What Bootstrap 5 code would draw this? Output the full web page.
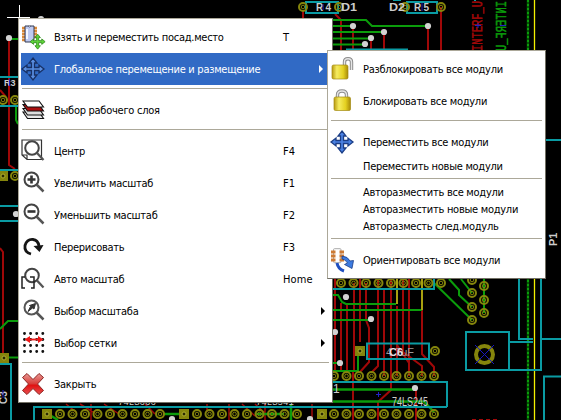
<!DOCTYPE html>
<html lang="ru">
<head>
<meta charset="utf-8">
<meta name="viewport" content="width=device-width, initial-scale=1">
<title>Pcbnew</title>
<link href="https://cdn.jsdelivr.net/npm/bootstrap@5.3.0/dist/css/bootstrap.min.css" rel="stylesheet">
<style>
body{width:561px;height:420px;background:#000;font-family:"DejaVu Sans Condensed","DejaVu Sans",sans-serif;font-stretch:condensed;font-size:11px;color:#000}
.board{width:561px;height:420px}
.ctx{background:#fff;border:1px solid #aca899;border-right-color:#716f64;border-bottom-color:#716f64;padding:2px;border-radius:0;line-height:17px;letter-spacing:-.27px}
.main-menu{left:18px;top:18px;width:315px;height:385px}
.sub-menu{left:327px;top:50px;width:219px;height:229px}
.mi{height:32px;color:#000;white-space:nowrap}
.mi.slim{height:17px}
.mi.chosen{background:#316ac5;color:#fff}
.ico{width:24px;height:24px;flex:none;overflow:visible}
.lbl{width:238px;padding-left:9px;flex:none}
.hotkey{letter-spacing:.1px}
.sub-menu .lbl{padding-left:9px;width:189px}
.sep{height:9px;padding:3px 1px 0}
.sep::before{content:"";display:block;height:1px;background:#aca899}
.arrow{width:4px;height:8px;margin-left:auto;margin-right:5px}
</style>
<script src="https://cdn.jsdelivr.net/npm/bootstrap@5.3.0/dist/js/bootstrap.bundle.min.js"></script>
</head>
<body class="position-relative overflow-hidden m-0">
<svg class="board d-block" viewBox="0 0 561 420" fill="none">
<defs>
<g id="pad"><circle r="4" stroke="#85850c" stroke-width="2"/><circle r="1.8" stroke="#85850c"/></g>
<g id="sq"><rect x="-5" y="-5" width="10" height="10" fill="#85850c"/><circle r="2" fill="#292900" stroke="#b0b030"/></g>
<circle id="via" r="3.1" fill="#d2d2d2"/>
<g id="row"><use href="#pad" x="0"/><use href="#pad" x="12.5"/><use href="#pad" x="25"/><use href="#pad" x="37.5"/><use href="#pad" x="50"/><use href="#pad" x="62.5"/><use href="#pad" x="75"/><use href="#pad" x="87.5"/><use href="#pad" x="100"/></g>
<g id="arrows4"><path d="M12 1 16 6H13.5V10.500H18V8L23 12 18 16V13.500H13.500V18H16L12 23 8 18H10.500V13.500H6V16L1 12 6 8V10.500H10.500V6H8Z"/></g>
</defs>
<!-- front copper -->
<g stroke="#a00808" stroke-width="2">
<path d="M9 38V165L15 169M0 90 6 97M0 248 3 252V353M303 10V18M335 14 341 20V50M353 26V50M384 32V50M371 38V50M428 26V50M441 7V50"/>
<path d="M335 279V372M341 303V372M347 303V372M354 283V372M360 279V342M366 283V320L369 328V362L360 372M378 279V366L372 372M384 290V376M391 279V390L378 402V420M397 306V376M403 279V356M409 279V376M422 310V354L434 367V376M403 352 422 366V376M397 345 409 363M353 372V420M416 389V420"/>
<path d="M66 404 76 412M80 404 95 413M91 404V420M104 404 119 414M145 404 155 414M207 404V412M229 404V420M242 404 255 416M255 404 266 414M265 404V420M312 404V420" stroke-width="1.500"/>
</g>
<!-- back copper -->
<g stroke="#0b9c0b" stroke-width="2">
<path d="M9 39H18M16 106V120L18 124M0 329 8 321H18M0 357.500H18M333 20H366L372 26H428M333 26H353M333 32H384M333 38.500H371M333 44.500H365"/>
<path d="M333 295H338L342 302L346 304H396M333 310H422M333 320H371M333 371H358V351M434 283 472 320M449 279 459 290V295L472 307M461 279 472 293M484 279V313M333 363H340"/>
<path d="M333 389.500H415M333 401.500H424L434 412M48 414 58 420M163 414H184M256 414H284M291 404V420" stroke-width="2.500"/>
<path d="M528 0V420" stroke-width="2.500" stroke="#045504"/><path d="M528 0V420" stroke="#0b9c0b" stroke-dasharray="2 2"/>
</g>
<path d="M397 279V304M422 279V310" stroke="#a8a010" stroke-width="2"/>
<path d="M534.500 0V420" stroke="#f4f000" stroke-width="1.300"/>
<!-- silkscreen -->
<g stroke="#0a9ba3" stroke-width="2">
<path d="M0 77H18M0 106H18M0 170H18M0 206H18M0 221H18M0 364H11V420M34 420V407H447M306 2H338V13H306ZM407 2H437V13H407ZM346 49.500H408M333 289H434V279M333 382H447V407M367 343.500H429V359H367ZM466 332H509V370H466ZM509 342H533M509 370H541V279M519 279V339H533M541 339H561M561 376.500H544V420M546 140H561M475 0V1M393 0H401"/>
</g>
<!-- pads -->
<g><use href="#pad" x="3" y="100"/><use href="#pad" x="15" y="100"/><use href="#sq" x="3" y="176"/><use href="#pad" x="15" y="176"/><use href="#sq" x="4" y="358"/>
<use href="#sq" x="47" y="414"/><use href="#row" x="60" y="414"/><use href="#sq" x="184" y="414"/><use href="#row" x="197" y="414"/><use href="#sq" x="322" y="414"/><use href="#row" x="334" y="414"/><use href="#row" x="334" y="376"/>
<use href="#row" x="341" y="283"/><use href="#pad" x="303" y="7"/><use href="#pad" x="339" y="7"/><use href="#pad" x="405" y="7"/><use href="#pad" x="441" y="7"/>
<use href="#sq" x="360" y="351"/><use href="#pad" x="435" y="351"/><use href="#pad" x="472" y="293"/><use href="#pad" x="472" y="307"/><use href="#pad" x="472" y="320"/><use href="#pad" x="472" y="280"/><use href="#pad" x="484" y="286"/><use href="#pad" x="484" y="300"/><use href="#pad" x="484" y="313"/>
<circle cx="484.500" cy="354.500" r="8.500" stroke="#85850c" stroke-width="4"/><path d="M475 345 494 364M494 345 475 364" stroke="#1818c0"/></g>
<g><use href="#via" x="9" y="38"/><use href="#via" x="41" y="19"/><use href="#via" x="353" y="26"/><use href="#via" x="371" y="38"/><use href="#via" x="365" y="44"/><use href="#via" x="384" y="32"/><use href="#via" x="428" y="26"/><use href="#via" x="346" y="297"/><use href="#via" x="371" y="319"/><use href="#via" x="340" y="363"/><use href="#via" x="335" y="332"/><use href="#via" x="415" y="388"/><use href="#via" x="16" y="214"/><use href="#via" x="310" y="419"/><use href="#via" x="172" y="419"/></g>
<path d="M19.500 5V18M7 17.500H30" stroke="#fff"/>
<g font-family="Liberation Sans" font-size="10" fill="#ccc">
<text x="4" y="86" font-weight="700" font-size="9">R3</text><path d="M9.500 79V86" stroke="#2020c0"/>
<text x="316" y="11" font-weight="700" textLength="15">R4</text><text x="341" y="11" font-weight="700" font-size="11" textLength="16" lengthAdjust="spacingAndGlyphs">D1</text><text x="389" y="11" font-weight="700" font-size="11" textLength="16" lengthAdjust="spacingAndGlyphs">D2</text><text x="414" y="11" font-weight="700" textLength="15">R5</text>
<path d="M422 3V11M323 4V10" stroke="#2020c0"/>
<text x="386" y="355.500" font-size="11" fill="#999" textLength="28">4.7uF</text><text x="389" y="356" font-weight="700" font-size="11" fill="#e4dce4">C6</text>
<text x="392" y="405.500" font-size="12" font-family="Liberation Sans Narrow,Liberation Sans" textLength="36" lengthAdjust="spacingAndGlyphs">74LS245</text>
<text x="333" y="393" font-size="12">1</text>
<text x="118" y="405" font-size="9" font-family="Liberation Mono">74LS666</text><text x="256" y="405" font-size="9" font-family="Liberation Mono">74LS541</text>
<text transform="translate(557 246) rotate(-90)" font-weight="700" font-size="11">P1</text>
<text transform="translate(7 404) rotate(-90)" font-weight="700" font-size="10">C3</text>
<text transform="translate(482 51) rotate(-90)" font-size="14" fill="#a00808" stroke="#a00808" stroke-width=".5" font-family="Liberation Mono" textLength="50" lengthAdjust="spacingAndGlyphs">INTERF_U</text>
<text transform="translate(506 1) rotate(90) scale(1 -1)" font-size="14" fill="#0b9c0b" stroke="#0b9c0b" stroke-width=".5" font-family="Liberation Mono" textLength="50" lengthAdjust="spacingAndGlyphs">INTERF_U</text>
</g>
<path d="M378.500 392V397M376 394.500H381M478 23V28M475 25.500H481M500 25.500H506M3 390V398" stroke="#2222c8"/>
<path d="M472 419.500H497" stroke="#a00808" stroke-dasharray="4 3"/>
</svg>

<nav class="ctx main-menu position-absolute">
<div class="mi d-flex align-items-center"><svg class="ico" viewBox="0 0 24 24"><path d="M1 3H5M1 6H5M1 9H5M1 12H5M1 15H5M12 3H16M12 6H16M12 9H16M12 12H16" stroke="#db8a38" stroke-width="2.500"/><path d="M4 1H13V14Q13 17 10 17H4Z" fill="#bfcaf0" stroke="#333a55"/><path d="M7 1Q8.500 3 10 1" fill="#fff" stroke="#333a55" stroke-width=".8"/><path d="M6 4V14" stroke="#f4f7ff" stroke-width="2"/><use href="#arrows4" transform="translate(8.500 8.500) scale(.68)" fill="#5fd43a" stroke="#2b8a18" stroke-width="1.200"/></svg><span class="lbl">Взять и переместить посад.место</span><span class="hotkey">T</span></div>
<div class="mi chosen d-flex align-items-center"><svg class="ico" viewBox="0 0 24 24"><use href="#arrows4" fill="#5a8ee0" stroke="#173064" stroke-width="1.300"/></svg><span class="lbl">Глобальное перемещение и размещение</span><svg class="arrow" style="margin-right:7px" viewBox="0 0 4 8"><path d="M0 0 4 4 0 8Z" fill="#fff"/></svg></div>
<div class="sep"></div>
<div class="mi d-flex align-items-center"><svg class="ico" viewBox="0 0 24 24" stroke="#111" stroke-width="1.100"><path d="M2 14H18L22.500 20.500H6.500Z" fill="#e8e8e8"/><path d="M2 10.500H18L22.500 17H6.500Z" fill="#ddd"/><path d="M2 6.500H18L22.500 13H6.500Z" fill="#aa1010"/><path d="M2 3H18L22.500 9H6.500Z" fill="#fff"/></svg><span class="lbl">Выбор рабочего слоя</span></div>
<div class="sep"></div>
<div class="mi d-flex align-items-center"><svg class="ico" viewBox="0 0 24 24" fill="none"><path d="M1 1H20.500V20.500H6L1 16ZM1 16H6V20.500" stroke="#333" stroke-width="1.200"/><circle cx="11" cy="9" r="6.800" stroke="#444" stroke-width="2"/><path d="M16 14 22.500 21" stroke="#555" stroke-width="2.300"/></svg><span class="lbl">Центр</span><span class="hotkey">F4</span></div>
<div class="mi d-flex align-items-center"><svg class="ico" viewBox="0 0 24 24" fill="none"><circle cx="10.500" cy="8.500" r="7" stroke="#444" stroke-width="2"/><path d="M15.500 13.500 22.500 20.500" stroke="#555" stroke-width="2.500"/><path d="M6.500 8.500H14.500M10.500 4.500V12.500" stroke="#333" stroke-width="2.600"/></svg><span class="lbl">Увеличить масштаб</span><span class="hotkey">F1</span></div>
<div class="mi d-flex align-items-center"><svg class="ico" viewBox="0 0 24 24" fill="none"><circle cx="10.500" cy="8.500" r="7" stroke="#444" stroke-width="2"/><path d="M15.500 13.500 22.500 20.500" stroke="#555" stroke-width="2.500"/><path d="M6.500 8.500H14.500" stroke="#333" stroke-width="2.600"/></svg><span class="lbl">Уменьшить масштаб</span><span class="hotkey">F2</span></div>
<div class="mi d-flex align-items-center"><svg class="ico" viewBox="0 0 24 24" fill="none"><path d="M10 19Q3 17 4 10.500Q6 4 12 4.500Q17 5 18 11" stroke="#151515" stroke-width="2.800"/><path d="M12.500 11 22.500 10 18.500 17Z" fill="#151515"/></svg><span class="lbl">Перерисовать</span><span class="hotkey">F3</span></div>
<div class="mi d-flex align-items-center"><svg class="ico" viewBox="0 0 24 24" fill="none"><circle cx="11" cy="8.500" r="6.800" stroke="#444" stroke-width="2"/><path d="M16 13.500 22.500 20.500" stroke="#555" stroke-width="2.300"/><path d="M4 10H1V21H4M9 10H13V21H10" stroke="#222" stroke-width="1.500"/></svg><span class="lbl">Авто масштаб</span><span class="hotkey">Home</span></div>
<div class="mi d-flex align-items-center"><svg class="ico" viewBox="0 0 24 24" fill="none"><circle cx="10.500" cy="8.500" r="7" stroke="#555" stroke-width="2"/><path d="M15.500 13.500 22.500 20.500" stroke="#555" stroke-width="2.500"/><path d="M14.500 4.500 13 10 11.500 9 7 12.500 9.500 7.500 8.500 6.500Z" fill="#333" stroke="#333"/></svg><span class="lbl">Выбор масштаба</span><svg class="arrow" viewBox="0 0 4 8"><path d="M0 0 4 4 0 8Z" fill="#000"/></svg></div>
<div class="mi d-flex align-items-center"><svg class="ico" viewBox="0 0 24 24" fill="none"><path d="M3.500 2.500H22.500M3.500 8.500H22.500M3.500 14.500H22.500M3.500 20.500H22.500" stroke="#111" stroke-width="2.900" stroke-linecap="round" stroke-dasharray="0 6.100"/><path d="M6 8.500H20" stroke="#f01818" stroke-width="1.800"/><path d="M3.500 8.500 9 5V12ZM22.500 8.500 17 5V12Z" fill="#f01818"/></svg><span class="lbl">Выбор сетки</span><svg class="arrow" viewBox="0 0 4 8"><path d="M0 0 4 4 0 8Z" fill="#000"/></svg></div>
<div class="sep"></div>
<div class="mi d-flex align-items-center"><svg class="ico" viewBox="0 0 24 24"><defs><linearGradient id="rd" x2="0" y2="1"><stop stop-color="#e89a96"/><stop offset=".5" stop-color="#d83a36"/><stop offset=".55" stop-color="#e01010"/><stop offset="1" stop-color="#e85050"/></linearGradient></defs><path d="M6 1.500 12 7.500 18 1.500 22.500 5.500 16.500 12 22.500 18.500 18 22.500 12 16.500 6 22.500 1.500 18.500 7.500 12 1.500 5.500Z" fill="url(#rd)" stroke="#8e2522"/></svg><span class="lbl">Закрыть</span></div>
</nav>

<nav class="ctx sub-menu position-absolute">
<div class="mi d-flex align-items-center"><svg class="ico" viewBox="0 0 24 24"><defs><linearGradient id="gd"><stop stop-color="#b89a10"/><stop offset=".3" stop-color="#f6ec60"/><stop offset=".7" stop-color="#e4d020"/><stop offset="1" stop-color="#a88a08"/></linearGradient></defs><path d="M14.500 10V5Q14.500 1.700 18 1.700Q21.500 1.700 21.500 5V13" fill="none" stroke="#8c8c8c" stroke-width="3.400"/><path d="M14.500 10V5Q14.500 1.700 18 1.700Q21.500 1.700 21.500 5V13" fill="none" stroke="#e6e6e6" stroke-width="1.400"/><rect x="2" y="8" width="16" height="14" rx="1.500" fill="url(#gd)" stroke="#a38b14" stroke-width=".7"/></svg><span class="lbl">Разблокировать все модули</span></div>
<div class="mi d-flex align-items-center"><svg class="ico" viewBox="0 0 24 24"><path d="M7.500 11V6Q7.500 2 12 2Q16.500 2 16.500 6V11" fill="none" stroke="#8c8c8c" stroke-width="3.400"/><path d="M7.500 11V6Q7.500 2 12 2Q16.500 2 16.500 6V11" fill="none" stroke="#e6e6e6" stroke-width="1.400"/><rect x="4" y="8" width="16.500" height="13.500" rx="1.500" fill="url(#gd)" stroke="#a38b14" stroke-width=".7"/></svg><span class="lbl">Блокировать все модули</span></div>
<div class="sep"></div>
<div class="mi d-flex align-items-center"><svg class="ico" viewBox="0 0 24 24"><use href="#arrows4" fill="#4a82e4" stroke="#1c3e86" stroke-width="1.300"/></svg><span class="lbl">Переместить все модули</span></div>
<div class="mi slim d-flex align-items-center"><span class="ico"></span><span class="lbl">Переместить новые модули</span></div>
<div class="sep"></div>
<div class="mi slim d-flex align-items-center"><span class="ico"></span><span class="lbl">Авторазместить все модули</span></div>
<div class="mi slim d-flex align-items-center"><span class="ico"></span><span class="lbl">Авторазместить новые модули</span></div>
<div class="mi slim d-flex align-items-center"><span class="ico"></span><span class="lbl">Авторазместь след.модуль</span></div>
<div class="sep"></div>
<div class="mi d-flex align-items-center"><svg class="ico" viewBox="0 0 24 24"><rect x="3.500" y=".7" width="7.500" height="14" rx="1" fill="#fff" stroke="#aaa"/><path d="M1 4H5.500M1 8H5.500M1 12H5.500M9.500 4H14M9.500 8H14M9.500 12H14" stroke="#cd7a34" stroke-width="2.800"/><path d="M7 15Q8 21 14 23" fill="none" stroke="#1f4fc0" stroke-width="3"/><path d="M12 8Q18 8.500 20 13L23.500 12.500 22 20.500 14.500 16.500 17.500 15Q15 11 12 11Z" fill="#3d7be0" stroke="#1c3e86" stroke-width=".8"/></svg><span class="lbl">Ориентировать все модули</span></div>
</nav>
</body>
</html>
